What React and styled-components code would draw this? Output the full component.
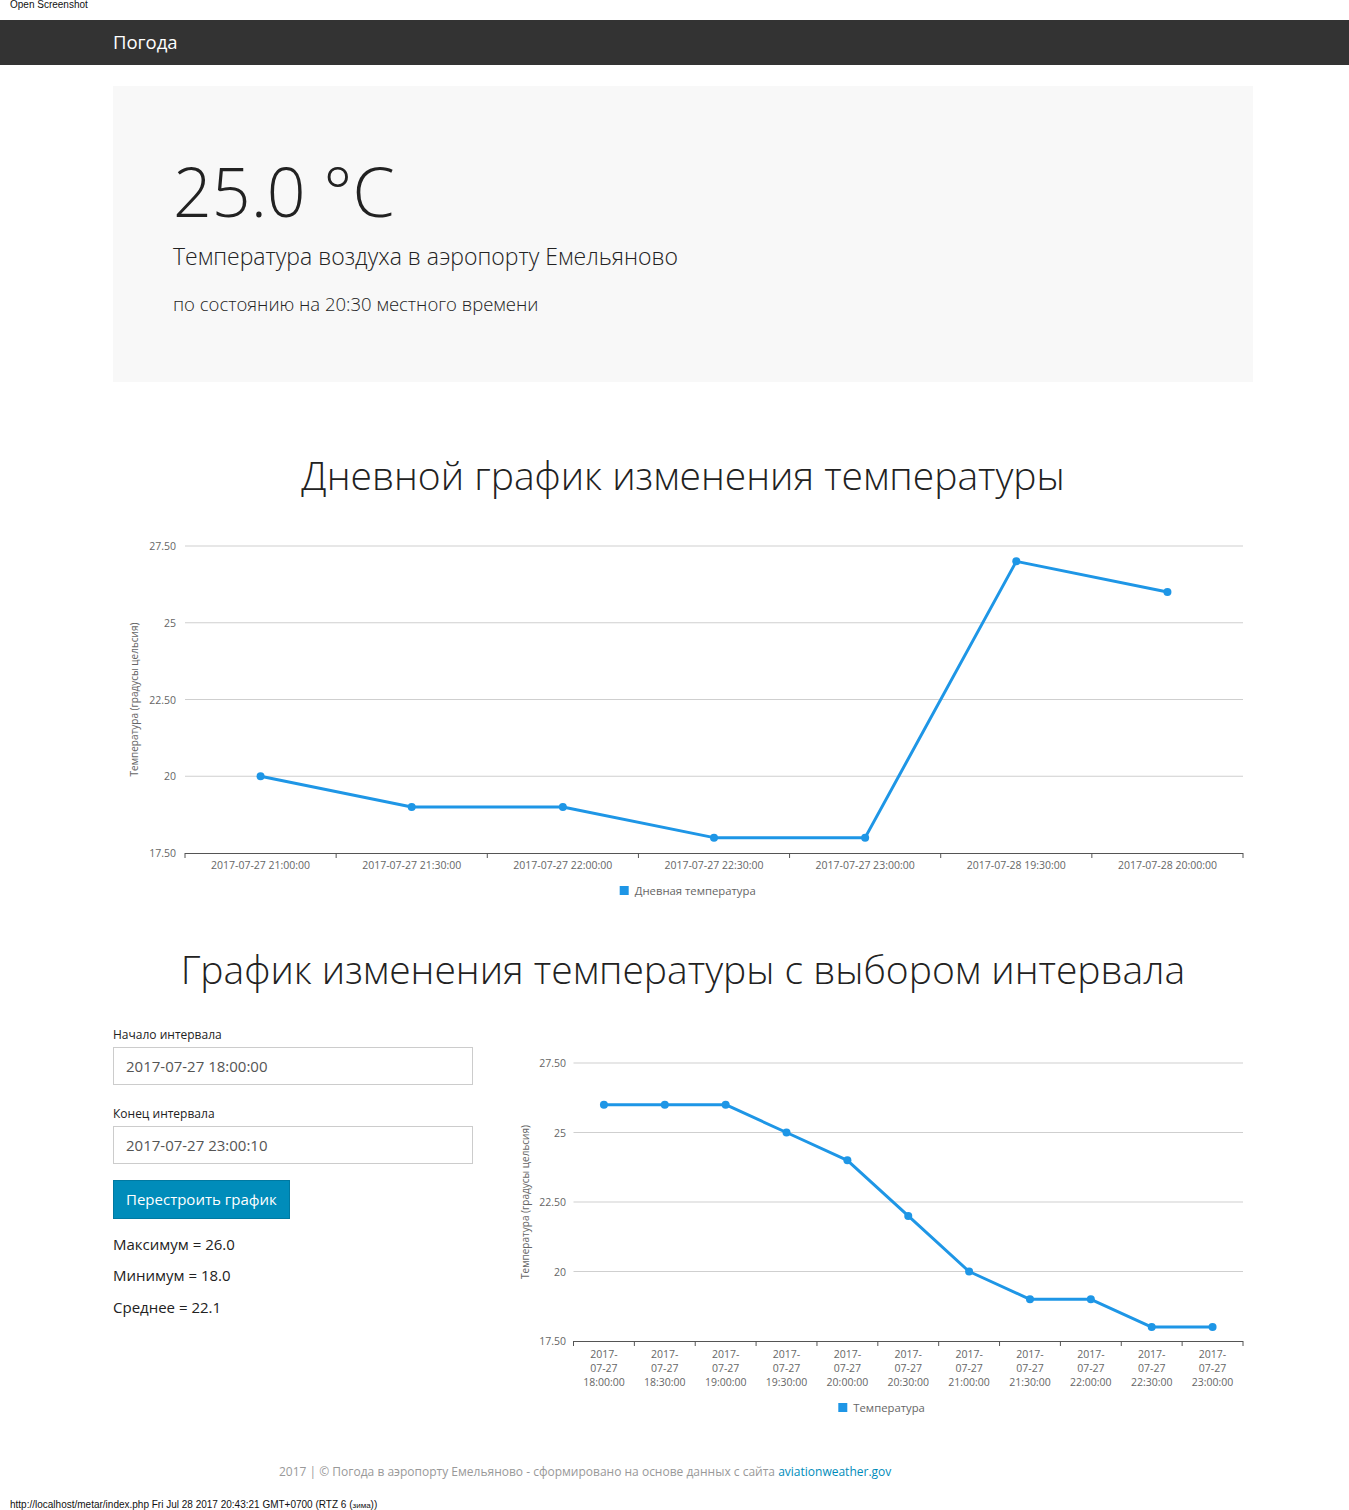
import React from "react";
import styled, { createGlobalStyle } from "styled-components";

const GlobalStyle = createGlobalStyle`
  html, body { margin: 0; padding: 0; background: #fff; }
  body { font-family: "Open Sans", "Noto Sans", sans-serif; color: #222; }
  * { box-sizing: border-box; }
`;

const Page = styled.div`
  width: 1349px;
  min-height: 1510px;
  display: flex;
  flex-direction: column;
`;

const TopStrip = styled.div`
  height: 20px;
  padding: 0 0 0 10px;
  font-family: "Liberation Sans", Arial, sans-serif;
  font-size: 10px;
  line-height: 10px;
  color: #111;
`;

const Navbar = styled.nav`
  height: 45px;
  background: #333333;
  display: flex;
  align-items: center;
  padding-left: 113px;
`;

const Brand = styled.span`
  color: #fff;
  font-family: "Open Sans", sans-serif;
  font-size: 18.5px;
  font-weight: 400;
  line-height: 1;
  margin-top: -1px;
`;

const Container = styled.div`
  width: 1140px;
  margin: 0 0 0 113px;
`;

const Jumbotron = styled.section`
  margin-top: 21px;
  background: #f8f8f8;
  height: 296px;
  padding: 64px 60px 0 60px;
`;

const BigTemp = styled.h1`
  margin: 0;
  font-size: 68px;
  font-weight: 300;
  line-height: 1.2;
  color: #222;
`;

const Lead = styled.p`
  margin: ${(p) => p.$mt}px 0 0 0;
  font-size: ${(p) => p.$size}px;
  font-weight: 300;
  line-height: 1.3;
  color: #222;
`;

const SectionTitle = styled.h2`
  margin: ${(p) => p.$mt}px 0 0 0;
  text-align: center;
  font-size: 39px;
  font-weight: 300;
  line-height: 1.2;
  color: #222;
`;

const ChartBox = styled.div`
  margin-top: ${(p) => p.$mt}px;
  display: block;
`;

const IntervalRow = styled.div`
  margin-top: 28px;
  display: grid;
  grid-template-columns: 360px 1fr;
  gap: 20px;
`;

const FormCol = styled.div`
  display: flex;
  flex-direction: column;
  padding-top: 5px;
`;

const Label = styled.label`
  font-size: 12px;
  color: #222;
  line-height: 18px;
  margin-bottom: 3px;
`;

const Input = styled.input`
  width: 360px;
  height: 38px;
  border: 1px solid #cccccc;
  padding: 0 12px;
  font-family: "Open Sans", sans-serif;
  font-size: 15px;
  color: #555;
  background: #fff;
  margin-bottom: ${(p) => p.$mb}px;
  outline: none;
`;

const Button = styled.button`
  align-self: flex-start;
  height: 39px;
  padding: 0 12px;
  background: #008cba;
  border: 1px solid #0079a1;
  color: #fff;
  font-family: "Open Sans", sans-serif;
  font-size: 15px;
  cursor: pointer;
`;

const StatList = styled.div`
  margin-top: 15px;
  display: flex;
  flex-direction: column;
  gap: 10.5px;
`;

const Stat = styled.div`
  font-size: 15px;
  line-height: 21px;
  color: #222;
`;

const Footer = styled.footer`
  margin-top: 48px;
  padding-left: 279px;
  font-size: 12px;
  color: #999;
  line-height: 18px;
`;

const FooterLink = styled.a`
  color: #008cba;
  text-decoration: none;
`;

const StatusLine = styled.div`
  margin-top: 18px;
  padding-left: 10px;
  font-family: "Liberation Sans", Arial, sans-serif;
  font-size: 10px;
  line-height: 12px;
  color: #111;
`;

const Small = styled.span`
  font-size: 8px;
`;

const BLUE = "#1e96e6";

function LineChart({ width, height, left, right, top, bottom, labels, values, legend, multi, legendY, legendCx, titleX, labelGap }) {
  const n = labels.length;
  const cw = (right - left) / n;
  const yMin = 17.5;
  const yMax = 27.5;
  const ys = (v) => bottom - ((v - yMin) / (yMax - yMin)) * (bottom - top);
  const ticks = [27.5, 25, 22.5, 20, 17.5];
  const tickLabel = (t) => (Number.isInteger(t) ? String(t) : t.toFixed(2));
  const pts = values.map((v, i) => [left + cw * (i + 0.5), ys(v)]);
  const legendW = legend.length * 6.4 + 15;
  const lx = legendCx - legendW / 2;
  return (
    <svg width={width} height={height} viewBox={`0 0 ${width} ${height}`} style={{ display: "block" }}>
      <g fontFamily="'Open Sans', sans-serif" fontSize="10.5" fill="#666">
        {ticks.map((t) => (
          <g key={t}>
            {t !== 17.5 && <line x1={left} x2={right} y1={ys(t)} y2={ys(t)} stroke="#cfcfcf" strokeWidth="1" />}
            <text x={left - labelGap} y={ys(t) + 4} textAnchor="end">{tickLabel(t)}</text>
          </g>
        ))}
        <line x1={left} x2={right} y1={bottom + 0.5} y2={bottom + 0.5} stroke="#555" strokeWidth="1" />
        {Array.from({ length: n + 1 }).map((_, i) => (
          <line key={i} x1={left + cw * i} x2={left + cw * i} y1={bottom} y2={bottom + 5} stroke="#555" strokeWidth="1" />
        ))}
        <text
          transform={`translate(${titleX}, ${(top + bottom) / 2}) rotate(-90)`}
          textAnchor="middle"
          fontSize="10"
        >
          Температура (градусы цельсия)
        </text>
        {labels.map((l, i) => {
          const cx = left + cw * (i + 0.5);
          if (multi) {
            const parts = [l.slice(0, 5), l.slice(5, 10), l.slice(11)];
            return (
              <text key={i} x={cx} y={bottom + 17} textAnchor="middle">
                {parts.map((p, k) => (
                  <tspan key={k} x={cx} dy={k === 0 ? 0 : 14}>{p}</tspan>
                ))}
              </text>
            );
          }
          return (
            <text key={i} x={cx} y={bottom + 16} textAnchor="middle">{l}</text>
          );
        })}
        <polyline points={pts.map((p) => p.join(",")).join(" ")} fill="none" stroke={BLUE} strokeWidth="3" strokeLinejoin="round" />
        {pts.map((p, i) => (
          <circle key={i} cx={p[0]} cy={p[1]} r="4" fill={BLUE} />
        ))}
        <rect x={lx} y={legendY - 8} width="9" height="9" fill={BLUE} />
        <text x={lx + 15} y={legendY + 0.5} fontSize="11.3">{legend}</text>
      </g>
    </svg>
  );
}

const dayLabels = [
  "2017-07-27 21:00:00",
  "2017-07-27 21:30:00",
  "2017-07-27 22:00:00",
  "2017-07-27 22:30:00",
  "2017-07-27 23:00:00",
  "2017-07-28 19:30:00",
  "2017-07-28 20:00:00",
];
const dayValues = [20, 19, 19, 18, 18, 27, 26];

const intLabels = [
  "18:00:00", "18:30:00", "19:00:00", "19:30:00", "20:00:00", "20:30:00",
  "21:00:00", "21:30:00", "22:00:00", "22:30:00", "23:00:00",
].map((t) => `2017-07-27 ${t}`);
const intValues = [26, 26, 26, 25, 24, 22, 20, 19, 19, 18, 18];

export default function App() {
  return (
    <Page>
      <GlobalStyle />
      <TopStrip>Open Screenshot</TopStrip>
      <Navbar>
        <Brand>Погода</Brand>
      </Navbar>
      <Container>
        <Jumbotron>
          <BigTemp>25.0 °C</BigTemp>
          <Lead $size={23} $mt={10}>Температура воздуха в аэропорту Емельяново</Lead>
          <Lead $size={18.5} $mt={21}>по состоянию на 20:30 местного времени</Lead>
        </Jumbotron>
        <SectionTitle $mt={70}>Дневной график изменения температуры</SectionTitle>
        <ChartBox $mt={36}>
          <LineChart
            width={1140}
            height={370}
            left={72}
            right={1130}
            top={11}
            bottom={318}
            labels={dayLabels}
            values={dayValues}
            legend="Дневная температура"
            legendY={359}
            legendCx={575}
            titleX={25}
            labelGap={9}
          />
        </ChartBox>
        <SectionTitle $mt={41}>График изменения температуры с выбором интервала</SectionTitle>
        <IntervalRow>
          <FormCol>
            <Label>Начало интервала</Label>
            <Input $mb={20} defaultValue="2017-07-27 18:00:00" />
            <Label>Конец интервала</Label>
            <Input $mb={16} defaultValue="2017-07-27 23:00:10" />
            <Button>Перестроить график</Button>
            <StatList>
              <Stat>Максимум = 26.0</Stat>
              <Stat>Минимум = 18.0</Stat>
              <Stat>Среднее = 22.1</Stat>
            </StatList>
          </FormCol>
          <ChartBox $mt={0}>
            <LineChart
              width={760}
              height={394}
              left={80.5}
              right={750}
              top={42}
              bottom={320}
              labels={intLabels}
              values={intValues}
              legend="Температура"
              multi
              legendY={390}
              legendCx={388}
              titleX={36}
              labelGap={7.5}
            />
          </ChartBox>
        </IntervalRow>
      </Container>
      <Footer>
        2017 | © Погода в аэропорту Емельяново - сформировано на основе данных с сайта{" "}
        <FooterLink href="#">aviationweather.gov</FooterLink>
      </Footer>
      <StatusLine>
        http://localhost/metar/index.php Fri Jul 28 2017 20:43:21 GMT+0700 (RTZ 6 (<Small>зима</Small>))
      </StatusLine>
    </Page>
  );
}
